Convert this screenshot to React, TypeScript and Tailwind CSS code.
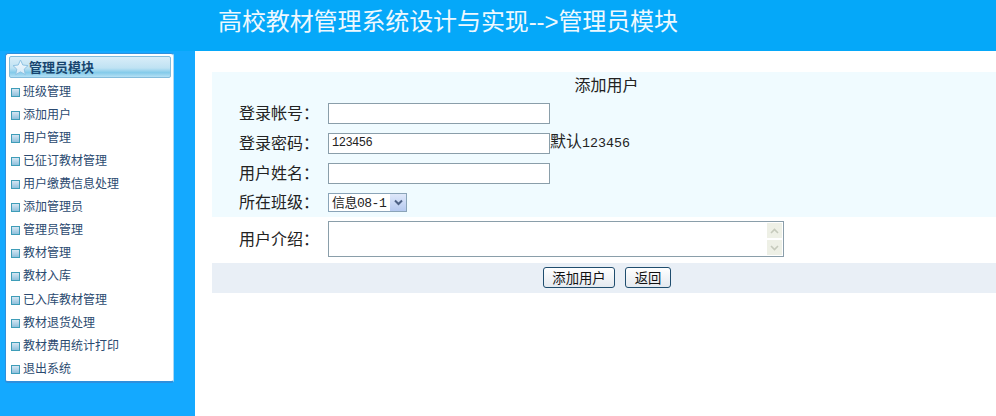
import React from 'react';

const menuItems = [
  '班级管理',
  '添加用户',
  '用户管理',
  '已征订教材管理',
  '用户缴费信息处理',
  '添加管理员',
  '管理员管理',
  '教材管理',
  '教材入库',
  '已入库教材管理',
  '教材退货处理',
  '教材费用统计打印',
  '退出系统',
];

const cjk = "font-['SimSun','Noto_Sans_CJK_SC',sans-serif]";

const Bullet = () => (
  <span className="w-[9px] h-[9px] mr-[3px] mt-[4px] shrink-0 border border-[#3f9db8] bg-gradient-to-b from-[#d5e6f3] to-[#8fc0dc]"></span>
);

const Star = () => (
  <svg width="17" height="17" viewBox="0 0 17 17" className="shrink-0">
    <defs>
      <linearGradient id="star" x1="0" y1="0" x2="0" y2="1">
        <stop offset="0" stopColor="#f4fafe" />
        <stop offset="1" stopColor="#d4e9f7" />
      </linearGradient>
    </defs>
    <polygon
      points="8.5,1 10.8,6 16,6.6 12.2,10.2 13.3,15.6 8.5,12.9 3.7,15.6 4.8,10.2 1,6.6 6.2,6"
      fill="url(#star)"
      stroke="#8fc3e3"
      strokeWidth="1"
    />
  </svg>
);

const Sidebar = () => (
  <aside className="w-[195px] shrink-0 bg-[#14a9ff] pt-[2px] pl-[5px]">
    <div className="w-[169px] h-[330px] bg-white rounded-[3px] border-b-2 border-x border-t border-[#2f8fdc] border-r-[#a9d8f5] pl-[3px] pr-[2px] pt-[2px]">
      <div className="h-[22px] flex items-center pl-[2px] rounded-[2px] border border-[#83bcdc] bg-[linear-gradient(#d9edf8,#bfe2f3_55%,#84cbea_78%,#b5e0f4)]">
        <Star />
        <span className="text-[13px] font-bold text-[#17456f] leading-none mb-[2px]">管理员模块</span>
      </div>
      <ul className="pt-px">
        {menuItems.map((item, i) => (
          <li
            key={item}
            className={`flex items-center pl-[2px] text-[12px] text-[#2b4a70] ${i === 8 ? 'h-[24px] pb-px' : 'h-[23px]'}`}
          >
            <Bullet />
            {item}
          </li>
        ))}
      </ul>
    </div>
  </aside>
);

const FormRow: React.FC<{ label: string; className: string; children: React.ReactNode }> = ({
  label,
  className,
  children,
}) => (
  <div className={`flex items-center ${className}`}>
    <label className="w-[116px] pl-[27px] mb-[3px] shrink-0 text-[16px] text-[#222] whitespace-nowrap">{label}</label>
    {children}
  </div>
);

const inputClass =
  "w-[222px] h-[21px] border border-[#8a9eaa] bg-white px-[3px] text-[12px] tracking-[-0.5px] text-[#222] outline-none font-['Liberation_Mono','Noto_Sans_CJK_SC',monospace]";

const buttonClass =
  'h-[21px] border border-[#1f4d6e] rounded-[3px] bg-gradient-to-b from-white to-[#e4e9ef] text-[13.33px] text-[#111] leading-none';

export default function App() {
  return (
    <div className={`h-[416px] w-[996px] overflow-hidden flex flex-col bg-white ${cjk}`}>
      <header className="h-[51px] shrink-0 bg-[#05a8f9] pl-[218px] pt-[6px]">
        <h1 className="text-[24px] leading-[32px] font-normal tracking-[-0.1px] text-[#eef8fe] whitespace-nowrap font-['Liberation_Sans','Noto_Sans_CJK_SC',sans-serif]">
          高校教材管理系统设计与实现--&gt;管理员模块
        </h1>
      </header>

      <div className="flex flex-1 min-h-0">
        <Sidebar />

        <main className="flex-1 pt-[21px] pl-[17px]">
          <div className="bg-[#f0fbff]">
            <div className="h-[26px] flex items-center justify-center pl-[5px] pb-[2px] text-[16px] text-[#222]">添加用户</div>
            <FormRow label="登录帐号：" className="h-[30px]">
              <input className={inputClass} />
            </FormRow>
            <FormRow label="登录密码：" className="h-[30px]">
              <input className={inputClass} defaultValue="123456" />
              <span className="text-[16px] leading-none text-[#222] -mt-[3px]">
                默认<span className="font-['Liberation_Mono',monospace] text-[13.33px]">123456</span>
              </span>
            </FormRow>
            <FormRow label="用户姓名：" className="h-[30px]">
              <input className={inputClass} />
            </FormRow>
            <FormRow label="所在班级：" className="h-[29px]">
              <div className="relative">
                <select className="block appearance-none w-[79px] h-[19px] border border-[#8aa4b8] bg-white pl-[3px] text-[13px] tracking-[-0.5px] text-[#222] outline-none font-['Liberation_Mono','Noto_Sans_CJK_SC',monospace]">
                  <option>信息08-1</option>
                </select>
                <span className="absolute right-px top-px w-[16px] h-[17px] flex items-center justify-center bg-gradient-to-b from-[#dfe8fa] to-[#b5c9ef]">
                  <svg width="9" height="7" viewBox="0 0 9 7">
                    <path d="M1 1.5 L4.5 5 L8 1.5" fill="none" stroke="#4d6185" strokeWidth="2" />
                  </svg>
                </span>
              </div>
            </FormRow>
          </div>

          <FormRow label="用户介绍：" className="h-[46px] pb-[2px]">
            <div className="w-[456px] h-[36px] flex border border-[#8a9eaa] bg-white">
              <textarea className="flex-1 resize-none outline-none text-[12px] px-[3px]" />
              <div className="w-[17px] flex flex-col">
                <span className="h-[17px] flex items-center justify-center bg-[#eef0e6] border border-white">
                  <svg width="9" height="6" viewBox="0 0 9 6">
                    <path d="M1 5 L4.5 1.5 L8 5" fill="none" stroke="#c6cabc" strokeWidth="1.6" />
                  </svg>
                </span>
                <span className="h-[17px] flex items-center justify-center bg-[#eef0e6] border border-white">
                  <svg width="9" height="6" viewBox="0 0 9 6">
                    <path d="M1 1 L4.5 4.5 L8 1" fill="none" stroke="#c6cabc" strokeWidth="1.6" />
                  </svg>
                </span>
              </div>
            </div>
          </FormRow>

          <div className="h-[30px] bg-[#e9eff6] flex items-start justify-center gap-[10px] pt-[4px] pl-[6px]">
            <button className={`w-[72px] ${buttonClass}`}>添加用户</button>
            <button className={`w-[46px] ${buttonClass}`}>返回</button>
          </div>
        </main>
      </div>
    </div>
  );
}
